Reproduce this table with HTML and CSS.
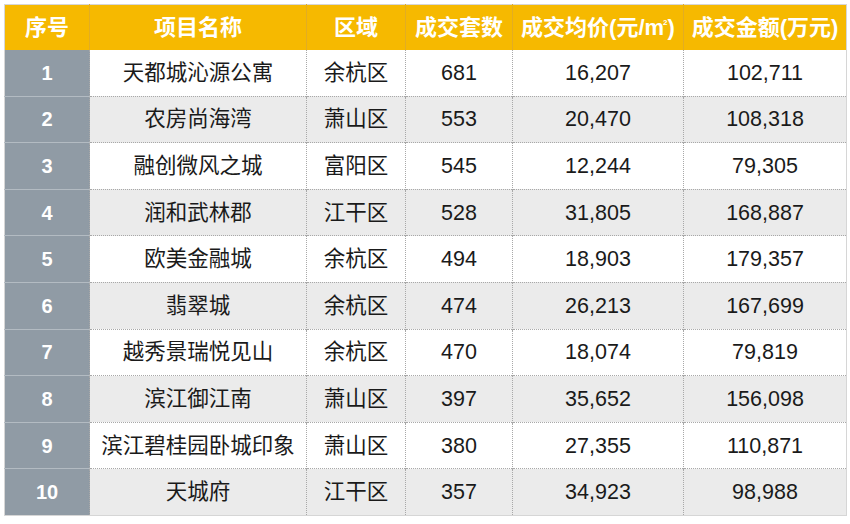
FILE: index.html
```html
<!DOCTYPE html>
<html lang="zh-CN">
<head>
<meta charset="utf-8">
<title>成交排行</title>
<link rel="stylesheet" href="styles.css">
</head>
<body>
<table class="rank">
  <colgroup>
    <col class="c1"><col class="c2"><col class="c3"><col class="c4"><col class="c5"><col class="c6">
  </colgroup>
  <thead>
    <tr>
      <th>序号</th><th>项目名称</th><th>区域</th><th>成交套数</th><th>成交均价(元/m<sup>2</sup>)</th><th>成交金额(万元)</th>
    </tr>
  </thead>
  <tbody>
    <tr><td class="idx">1</td><td>天都城沁源公寓</td><td>余杭区</td><td>681</td><td>16,207</td><td>102,711</td></tr>
    <tr class="alt"><td class="idx">2</td><td>农房尚海湾</td><td>萧山区</td><td>553</td><td>20,470</td><td>108,318</td></tr>
    <tr><td class="idx">3</td><td>融创微风之城</td><td>富阳区</td><td>545</td><td>12,244</td><td>79,305</td></tr>
    <tr class="alt"><td class="idx">4</td><td>润和武林郡</td><td>江干区</td><td>528</td><td>31,805</td><td>168,887</td></tr>
    <tr><td class="idx">5</td><td>欧美金融城</td><td>余杭区</td><td>494</td><td>18,903</td><td>179,357</td></tr>
    <tr class="alt"><td class="idx">6</td><td>翡翠城</td><td>余杭区</td><td>474</td><td>26,213</td><td>167,699</td></tr>
    <tr><td class="idx">7</td><td>越秀景瑞悦见山</td><td>余杭区</td><td>470</td><td>18,074</td><td>79,819</td></tr>
    <tr class="alt"><td class="idx">8</td><td>滨江御江南</td><td>萧山区</td><td>397</td><td>35,652</td><td>156,098</td></tr>
    <tr><td class="idx">9</td><td>滨江碧桂园卧城印象</td><td>萧山区</td><td>380</td><td>27,355</td><td>110,871</td></tr>
    <tr class="alt"><td class="idx">10</td><td>天城府</td><td>江干区</td><td>357</td><td>34,923</td><td>98,988</td></tr>
  </tbody>
</table>
</body>
</html>
```
FILE: styles.css
```css
html, body {
  margin: 0;
  padding: 0;
  background: #ffffff;
}
body {
  padding: 4px 0 0 4px;
  font-family: "Liberation Sans", "Noto Sans CJK SC", sans-serif;
  color: #1a1a1a;
}
.rank {
  border-collapse: collapse;
  table-layout: fixed;
  width: 842px;
  border: 1px solid #d6d6d6;
}
.c1 { width: 85px; }
.c2 { width: 217px; }
.c3 { width: 99px; }
.c4 { width: 107px; }
.c5 { width: 171px; }
.c6 { width: 163px; }

.rank th {
  height: 45px;
  padding: 0;
  line-height: 26px;
  background: #f6b900;
  color: #ffffff;
  font-weight: bold;
  font-size: 22px;
  text-align: center;
  vertical-align: middle;
  border-left: 1px solid #e2ad22;
  white-space: nowrap;
}
.rank th:first-child { border-left: none; }
.rank th sup {
  font-size: 8px;
  line-height: 0;
  vertical-align: 10px;
  margin-left: -1px;
}
.rank td {
  height: 45.6px;
  padding: 0;
  line-height: 26px;
  font-size: 21.5px;
  text-align: center;
  vertical-align: middle;
  border-left: 1px dotted #a8a8a8;
  border-top: 1px dotted #a8a8a8;
  background: #ffffff;
  white-space: nowrap;
}
.rank tr.alt td { background: #ebebeb; }
.rank td.idx,
.rank tr.alt td.idx {
  background: #909ba5;
  color: #ffffff;
  font-weight: bold;
  font-size: 20px;
  border-left: none;
  border-top: 1px solid #b3bbc2;
}
.rank tbody tr:first-child td { border-top: none; }
```
